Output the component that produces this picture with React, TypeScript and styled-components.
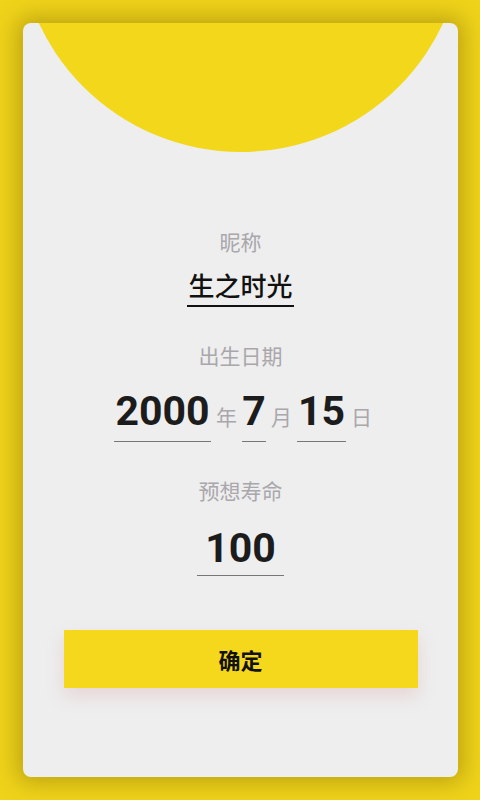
import React from 'react';
import styled, { createGlobalStyle } from 'styled-components';

const GlobalStyle = createGlobalStyle`
  html, body {
    margin: 0;
    padding: 0;
  }

  body {
    font-family: 'Roboto', 'Noto Sans CJK SC', sans-serif;
  }
`;

const Page = styled.div`
  box-sizing: border-box;
  width: 100%;
  height: 800px;
  padding: 23px 22px 23px 23px;
  background-color: #efd31a;
`;

const Card = styled.div`
  position: relative;
  overflow: hidden;
  height: 754px;
  display: flex;
  flex-direction: column;
  align-items: center;
  padding-top: 206px;
  box-sizing: border-box;
  background-color: #eeeeee;
  border-radius: 8px;
  box-shadow: 0 0 22px 6px rgba(110, 90, 0, 0.38);
`;

// big yellow disc peeking in from above the card
const Sun = styled.div`
  position: absolute;
  top: -317px;
  left: 50%;
  width: 446px;
  height: 446px;
  transform: translateX(-50%);
  border-radius: 50%;
  background-color: #f2d71b;
`;

const Label = styled.div<{ $gap?: number }>`
  margin-top: ${({ $gap }) => $gap || 0}px;
  font-size: 21px;
  line-height: 28px;
  color: #a9a7ac;
`;

const Name = styled.div`
  margin-top: 13px;
  padding: 0 1px 1px;
  font-size: 26px;
  font-weight: 500;
  line-height: 34px;
  color: #111111;
  border-bottom: 2px solid #111111;
`;

const DateRow = styled.div`
  margin-top: 16px;
  margin-left: 10px;
  display: flex;
  align-items: baseline;
`;

const Field = styled.div<{ $width: number; $pad: number; $gap?: number }>`
  margin-top: ${({ $gap }) => $gap || 0}px;
  width: ${({ $width }) => $width}px;
  padding-bottom: ${({ $pad }) => $pad}px;
  text-align: center;
  font-family: 'Roboto', sans-serif;
  font-weight: 700;
  font-size: 41px;
  line-height: 48px;
  color: #1c1c1c;
  border-bottom: 1px solid #777777;
`;

const Unit = styled.span`
  margin: 0 5px;
  font-size: 21px;
  color: #a9a7ac;
`;

const Confirm = styled.button`
  margin-top: 54px;
  width: 354px;
  height: 58px;
  border: none;
  background-color: #f5d81c;
  font-family: 'Roboto', 'Noto Sans CJK SC', sans-serif;
  font-size: 22px;
  font-weight: 700;
  color: #111111;
  box-shadow: 0 8px 16px rgba(215, 150, 150, 0.28);
`;

const App = () => {
  return (
    <>
      <GlobalStyle />
      <Page>
        <Card>
          <Sun />

          <Label>昵称</Label>
          <Name>生之时光</Name>

          <Label $gap={36}>出生日期</Label>
          <DateRow>
            <Field $width={97} $pad={6}>2000</Field>
            <Unit>年</Unit>
            <Field $width={24} $pad={6}>7</Field>
            <Unit>月</Unit>
            <Field $width={49} $pad={6}>15</Field>
            <Unit>日</Unit>
          </DateRow>

          <Label $gap={36}>预想寿命</Label>
          <Field $width={87} $pad={3} $gap={18}>100</Field>

          <Confirm>确定</Confirm>
        </Card>
      </Page>
    </>
  );
};

export default App;
